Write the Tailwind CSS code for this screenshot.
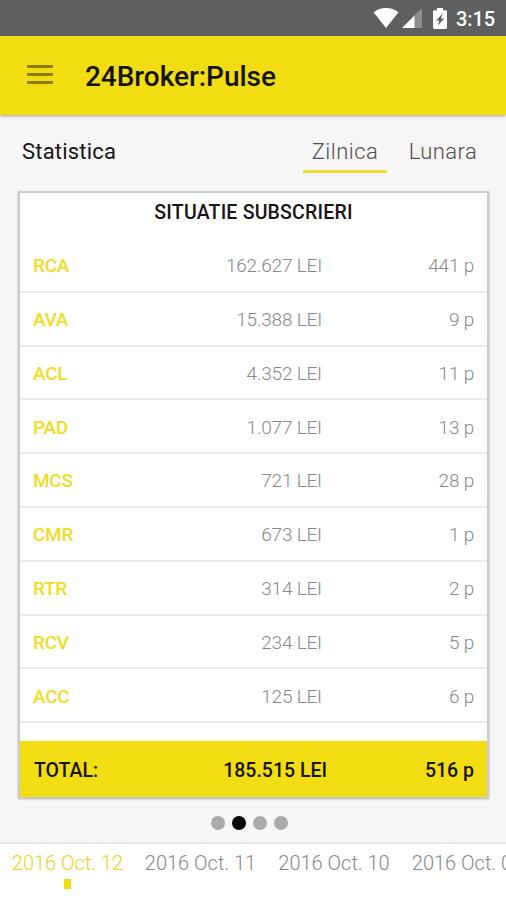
<!DOCTYPE html>
<html lang="ro">
<head>
  <meta charset="UTF-8" />
  <meta name="viewport" content="width=device-width, initial-scale=1.0" />
  <title>24Broker:Pulse</title>
  <script src="https://cdn.jsdelivr.net/npm/@tailwindcss/browser@4"></script>
</head>
<body class="h-[900px] w-[506px] overflow-hidden bg-[#f7f5f6] font-['Roboto',sans-serif] flex flex-col">
  <!-- Status bar -->
  <div class="h-9 shrink-0 bg-[#5f5f5f] flex items-center justify-end pr-[11px] text-white">
    <svg class="w-[26px] h-5" viewBox="0 0 26 20" fill="currentColor">
      <path d="M13 20 0.5 4.2C4 1.6 8.3 0 13 0s9 1.6 12.5 4.2Z" />
    </svg>
    <svg class="ml-[3px] w-5 h-5" viewBox="0 0 20 20" fill="currentColor">
      <path d="M0 20 20 0v20Z" fill-opacity="0.3" />
      <path d="M0 20 12.5 7.5V20Z" />
    </svg>
    <svg class="ml-[11px] w-3.5 h-[21px]" viewBox="0 0 14 21" fill="currentColor">
      <path fill-rule="evenodd" d="M4 0h6v2.2h2.6Q14 2.2 14 3.6v16q0 1.4-1.4 1.4H1.4Q0 21 0 19.6v-16Q0 2.2 1.4 2.2H4ZM9.8 5.5 3 12.6h3.3L4.8 17.5 11.3 10.5H7.9Z" />
    </svg>
    <span class="ml-[9px] text-[20px] leading-none font-medium tracking-[-0.1px] pt-0.5">3:15</span>
  </div>

  <!-- App bar -->
  <header class="h-[79px] shrink-0 bg-[#f2dd12] flex items-center pl-[27px] shadow-[0_1px_3px_rgba(0,0,0,0.35)]">
    <button class="flex flex-col gap-[5px] -mt-0.5" aria-label="Meniu">
      <span class="block w-[26px] h-[3px] bg-[#8a7e0c]"></span>
      <span class="block w-[26px] h-[3px] bg-[#8a7e0c]"></span>
      <span class="block w-[26px] h-[3px] bg-[#8a7e0c]"></span>
    </button>
    <h1 class="ml-8 pt-0.5 text-[28px] leading-none font-medium tracking-[-0.05px] text-[#161402]">24Broker:Pulse</h1>
  </header>

  <!-- Tabs -->
  <div class="h-[58px] mt-[18px] shrink-0 flex items-start pl-[22px] pr-[21px] text-[22px]">
    <h2 class="leading-[37px] text-[#161616] tracking-[0.2px]">Statistica</h2>
    <a class="ml-auto w-[84px] h-10 text-center leading-[37px] font-light tracking-[0.5px] text-[#505050] border-b-3 border-[#ecdb35]">Zilnica</a>
    <a class="ml-3.5 w-[84px] text-center leading-[37px] font-light tracking-[0.4px] text-[#505050]">Lunara</a>
  </div>

  <!-- Table card -->
  <section class="ml-[18px] mr-[17px] h-[607px] mb-px shrink-0 flex flex-col bg-white border-2 border-b-1 border-[#cccccc] shadow-[0_1px_2px_rgba(0,0,0,0.3)]">
    <h3 class="h-[46px] text-center text-[19.5px] leading-[40px] font-medium tracking-[0.2px] text-[#151515]">SITUATIE SUBSCRIERI</h3>
    <div id="rows" class="flex-1"></div>
    <div class="h-[56px] shrink-0 bg-[#f2dd12] flex items-center pt-[3px] pl-3.5 pr-[13px] text-[19.5px] font-medium text-[#161402]">
      <span class="w-[150px]">TOTAL:</span>
      <span class="w-[143px] text-right">185.515 LEI</span>
      <span class="flex-1 text-right">516 p</span>
    </div>
  </section>

  <!-- Page dots -->
  <div class="h-[43px] shrink-0 flex justify-center items-center gap-[7px] pt-[5px] pr-[7px]">
    <span class="size-3.5 rounded-full bg-[#aaaaaa]"></span>
    <span class="size-3.5 rounded-full bg-black"></span>
    <span class="size-3.5 rounded-full bg-[#aaaaaa]"></span>
    <span class="size-3.5 rounded-full bg-[#aaaaaa]"></span>
  </div>

  <!-- Dates -->
  <nav class="flex-1 overflow-hidden bg-white border-t-2 border-[#e6e6e6] flex pl-px text-[20px] leading-[38px] font-light text-[#888888] whitespace-nowrap">
    <div class="w-[133px] shrink-0 text-center text-[#ecd410] flex flex-col items-center">
      <span>2016 Oct. 12</span>
      <span class="-mt-[3px] w-[7px] h-2.5 bg-[#f2dd12]"></span>
    </div>
    <span class="w-[133px] shrink-0 text-center">2016 Oct. 11</span>
    <span class="w-[134px] shrink-0 text-center">2016 Oct. 10</span>
    <span class="w-[133px] shrink-0 text-center">2016 Oct. 09</span>
  </nav>

  <script>
    const rows = [
      ['RCA', '162.627', 441],
      ['AVA', '15.388', 9],
      ['ACL', '4.352', 11],
      ['PAD', '1.077', 13],
      ['MCS', '721', 28],
      ['CMR', '673', 1],
      ['RTR', '314', 2],
      ['RCV', '234', 5],
      ['ACC', '125', 6]
    ];

    document.getElementById('rows').innerHTML = rows.map(([code, sum, count]) => `
      <div class="h-[53.8px] flex items-center pt-[3px] px-[13px] border-b-2 border-[#ececec] text-[19px] text-[#888888]">
        <span class="w-[150px] font-medium tracking-[-0.3px] text-[#f0dc25]">${code}</span>
        <span class="w-[139px] text-right font-light tracking-[-0.2px]">${sum} LEI</span>
        <span class="flex-1 text-right font-light tracking-[-0.2px]">${count} p</span>
      </div>
    `).join('');
  </script>
</body>
</html>
